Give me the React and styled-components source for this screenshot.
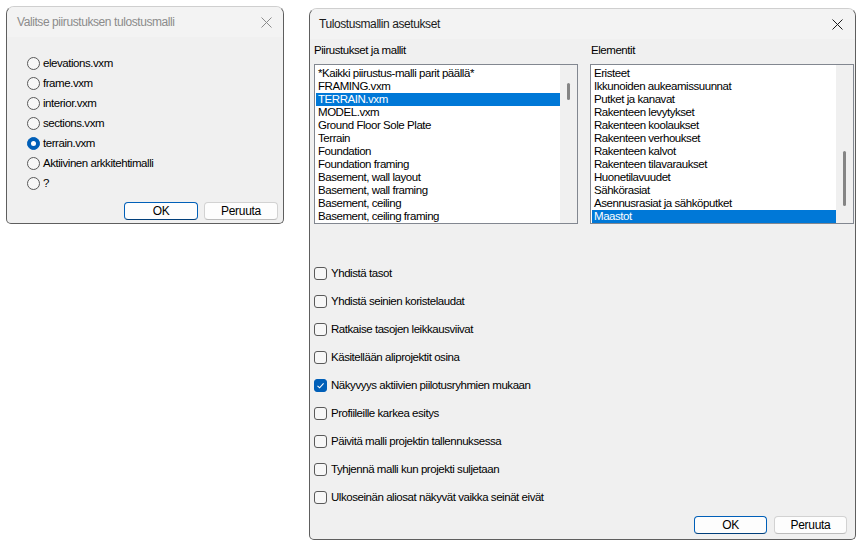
import React from "react";
import styled, { createGlobalStyle } from "styled-components";

const GlobalStyle = createGlobalStyle`
  html, body {
    margin: 0;
    padding: 0;
    background: #ffffff;
  }
  body {
    font-family: "Liberation Sans", Arial, sans-serif;
    color: #000;
  }
`;

const Page = styled.div`
  display: flex;
  align-items: flex-start;
  gap: 25px;
  padding: 6px;
`;

const Dialog = styled.div`
  box-sizing: border-box;
  width: ${(p) => p.$width}px;
  height: ${(p) => p.$height}px;
  margin-top: ${(p) => p.$offset || 0}px;
  display: flex;
  flex-direction: column;
  background: #f0f0f0;
  border: 1px solid #5e5e5e;
  border-top-color: #cfcfcf;
  border-radius: 8px 8px 5px 5px;
  overflow: hidden;
`;

const TitleBar = styled.div`
  flex: 0 0 30px;
  display: flex;
  align-items: center;
  justify-content: space-between;
  padding: 0 ${(p) => p.$right}px 0 ${(p) => p.$left}px;
  background: #f3f3f3;
`;

const Title = styled.span`
  font-size: 12px;
  letter-spacing: -0.42px;
  color: ${(p) => (p.$inactive ? "#8b8b8b" : "#1b1b1b")};
`;

const CloseIcon = ({ color }) => (
  <svg width="11" height="11" viewBox="0 0 11 11">
    <path d="M0.5 0.5 L10.5 10.5 M10.5 0.5 L0.5 10.5" stroke={color} strokeWidth="1" fill="none" />
  </svg>
);

const Body = styled.div`
  flex: 1;
  display: flex;
  flex-direction: column;
  padding: ${(p) => p.$pad};
`;

const RadioList = styled.div`
  display: flex;
  flex-direction: column;
`;

const RadioRow = styled.label`
  height: 20px;
  display: flex;
  align-items: center;
  gap: 3px;
  font-size: 11.5px;
  letter-spacing: -0.45px;
`;

const RadioMark = styled.span`
  box-sizing: border-box;
  width: 13px;
  height: 13px;
  border-radius: 50%;
  flex: 0 0 auto;
  display: flex;
  align-items: center;
  justify-content: center;
  background: ${(p) => (p.$checked ? "#005fb8" : "#f7f7f7")};
  border: 1px solid ${(p) => (p.$checked ? "#005fb8" : "#5a5a5a")};

  &::after {
    content: "";
    display: ${(p) => (p.$checked ? "block" : "none")};
    width: 5px;
    height: 5px;
    border-radius: 50%;
    background: #fff;
  }
`;

const ButtonRow = styled.div`
  display: flex;
  justify-content: flex-end;
  gap: ${(p) => p.$gap}px;
  margin-top: ${(p) => p.$top}px;
  padding-right: ${(p) => p.$right || 0}px;
`;

const Button = styled.button`
  box-sizing: border-box;
  width: ${(p) => p.$width}px;
  height: 18px;
  padding: 0;
  font-family: "Liberation Sans", Arial, sans-serif;
  font-size: 12px;
  letter-spacing: -0.3px;
  color: #000;
  background: #fdfdfd;
  border: 1px solid ${(p) => (p.$primary ? "#005fb8" : "#d2d2d2")};
  border-bottom-color: ${(p) => (p.$primary ? "#003e7a" : "#bcbcbc")};
  border-radius: 4px;
`;

const ListsRow = styled.div`
  display: flex;
  gap: 12px;
`;

const ListColumn = styled.div`
  display: flex;
  flex-direction: column;
  width: 264px;
`;

const ListLabel = styled.div`
  padding-top: 5px;
  height: 13px;
  line-height: 13px;
  margin-bottom: 7px;
  font-size: 11.5px;
  letter-spacing: -0.45px;
  padding-left: ${(p) => p.$indent || 0}px;
`;

const ListBox = styled.div`
  box-sizing: border-box;
  height: 160px;
  display: flex;
  background: #fff;
  border: 1px solid #828790;
`;

const ListItems = styled.div`
  flex: 1;
  padding: 2px 0 0 1px;
  display: flex;
  flex-direction: column;
  overflow: hidden;
`;

const ListItem = styled.div`
  height: 13px;
  line-height: 13px;
  padding-left: 2px;
  font-size: 11.5px;
  letter-spacing: -0.45px;
  white-space: nowrap;
  background: ${(p) => (p.$selected ? "#0078d7" : "transparent")};
  color: ${(p) => (p.$selected ? "#fff" : "#000")};
`;

const ScrollTrack = styled.div`
  flex: 0 0 17px;
  display: flex;
  flex-direction: column;
  align-items: center;
  background: #f0f0f0;
`;

const ScrollThumb = styled.div`
  width: 3px;
  border-radius: 2px;
  background: #858585;
`;

const CheckList = styled.div`
  display: flex;
  flex-direction: column;
  margin-top: 35px;
`;

const CheckRow = styled.label`
  height: 28px;
  display: flex;
  align-items: center;
  gap: 4px;
  font-size: 11.5px;
  letter-spacing: -0.45px;
`;

const CheckMark = styled.span`
  box-sizing: border-box;
  width: 13px;
  height: 13px;
  flex: 0 0 auto;
  border-radius: 3px;
  display: flex;
  align-items: center;
  justify-content: center;
  background: ${(p) => (p.$checked ? "#005fb8" : "#f7f7f7")};
  border: 1px solid ${(p) => (p.$checked ? "#005fb8" : "#5a5a5a")};
`;

const templates = [
  "elevations.vxm",
  "frame.vxm",
  "interior.vxm",
  "sections.vxm",
  "terrain.vxm",
  "Aktiivinen arkkitehtimalli",
  "?",
];

const drawings = [
  "*Kaikki piirustus-malli parit päällä*",
  "FRAMING.vxm",
  "TERRAIN.vxm",
  "MODEL.vxm",
  "Ground Floor Sole Plate",
  "Terrain",
  "Foundation",
  "Foundation framing",
  "Basement, wall layout",
  "Basement, wall framing",
  "Basement, ceiling",
  "Basement, ceiling framing",
];

const elements = [
  "Eristeet",
  "Ikkunoiden aukeamissuunnat",
  "Putket ja kanavat",
  "Rakenteen levytykset",
  "Rakenteen koolaukset",
  "Rakenteen verhoukset",
  "Rakenteen kalvot",
  "Rakenteen tilavaraukset",
  "Huonetilavuudet",
  "Sähkörasiat",
  "Asennusrasiat ja sähköputket",
  "Maastot",
];

const options = [
  ["Yhdistä tasot", false],
  ["Yhdistä seinien koristelaudat", false],
  ["Ratkaise tasojen leikkausviivat", false],
  ["Käsitellään aliprojektit osina", false],
  ["Näkyvyys aktiivien piilotusryhmien mukaan", true],
  ["Profiileille karkea esitys", false],
  ["Päivitä malli projektin tallennuksessa", false],
  ["Tyhjennä malli kun projekti suljetaan", false],
  ["Ulkoseinän aliosat näkyvät vaikka seinät eivät", false],
];

const List = ({ items, selected, thumbTop, thumbHeight }) => (
  <ListBox>
    <ListItems>
      {items.map((item, i) => (
        <ListItem key={item} $selected={i === selected}>
          {item}
        </ListItem>
      ))}
    </ListItems>
    <ScrollTrack>
      <ScrollThumb style={{ marginTop: thumbTop, height: thumbHeight }} />
    </ScrollTrack>
  </ListBox>
);

export default function App() {
  return (
    <>
      <GlobalStyle />
      <Page>
        <Dialog $width={278} $height={218}>
          <TitleBar $left={10} $right={11}>
            <Title $inactive>Valitse piirustuksen tulostusmalli</Title>
            <CloseIcon color="#8b8b8b" />
          </TitleBar>
          <Body $pad="16px 5px 0 20px">
            <RadioList>
              {templates.map((name) => (
                <RadioRow key={name}>
                  <RadioMark $checked={name === "terrain.vxm"} />
                  {name}
                </RadioRow>
              ))}
            </RadioList>
            <ButtonRow $gap={6} $top={9}>
              <Button $width={74} $primary>OK</Button>
              <Button $width={74}>Peruuta</Button>
            </ButtonRow>
          </Body>
        </Dialog>

        <Dialog $width={547} $height={532} $offset={2}>
          <TitleBar $left={9} $right={12}>
            <Title>Tulostusmallin asetukset</Title>
            <CloseIcon color="#1b1b1b" />
          </TitleBar>
          <Body $pad="0 1px 0 4px">
            <ListsRow>
              <ListColumn>
                <ListLabel>Piirustukset ja mallit</ListLabel>
                <List items={drawings} selected={2} thumbTop={18} thumbHeight={17} />
              </ListColumn>
              <ListColumn>
                <ListLabel $indent={1}>Elementit</ListLabel>
                <List items={elements} selected={11} thumbTop={86} thumbHeight={55} />
              </ListColumn>
            </ListsRow>
            <CheckList>
              {options.map(([text, checked]) => (
                <CheckRow key={text}>
                  <CheckMark $checked={checked}>
                    {checked && (
                      <svg width="9" height="9" viewBox="0 0 9 9">
                        <path d="M1.5 4.8 L3.6 6.8 L7.6 2.3" stroke="#fff" strokeWidth="1.1" fill="none" />
                      </svg>
                    )}
                  </CheckMark>
                  {text}
                </CheckRow>
              ))}
            </CheckList>
            <ButtonRow $gap={7} $top={5} $right={7}>
              <Button $width={73} $primary>OK</Button>
              <Button $width={73}>Peruuta</Button>
            </ButtonRow>
          </Body>
        </Dialog>
      </Page>
    </>
  );
}
